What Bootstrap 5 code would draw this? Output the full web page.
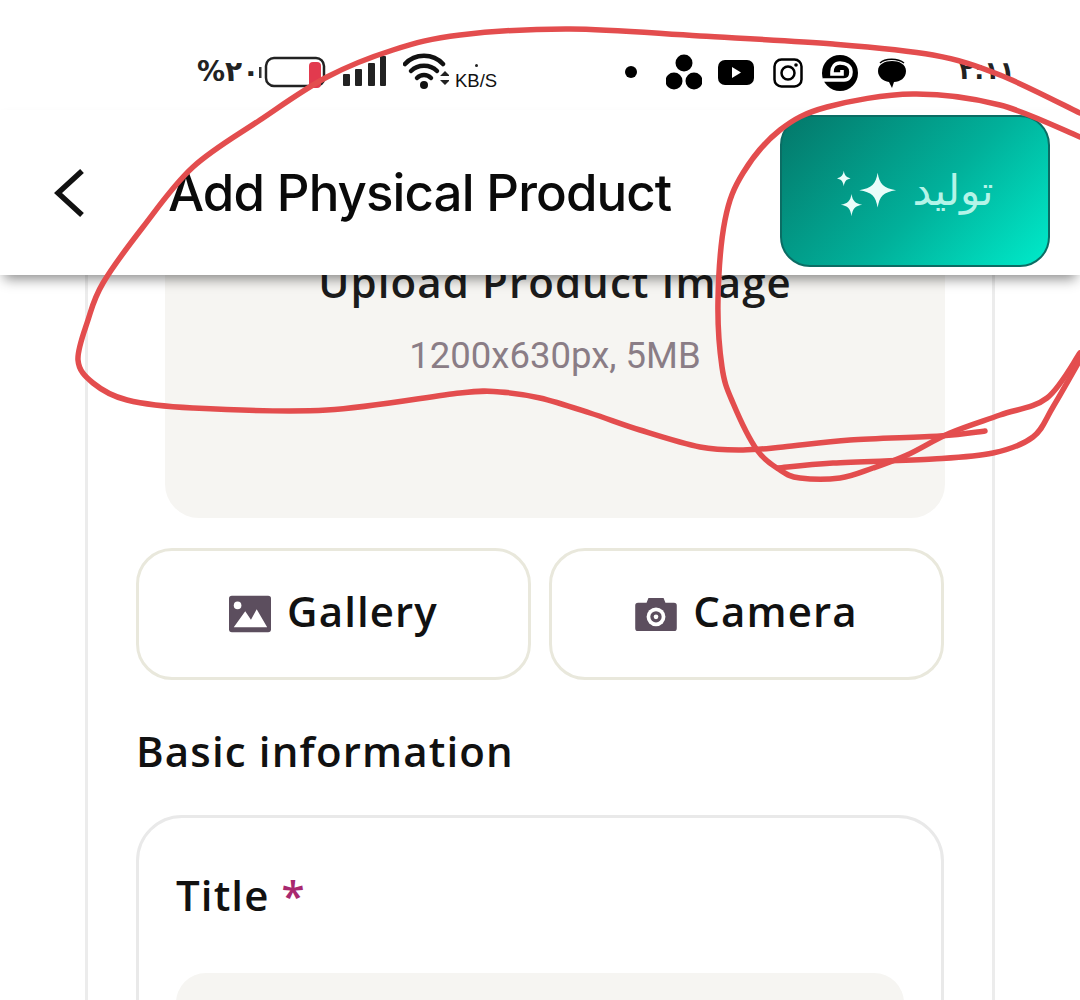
<!DOCTYPE html>
<html lang="en">
<head>
  <meta charset="UTF-8">
  <meta name="viewport" content="width=device-width, initial-scale=1.0">
  <title>Add Physical Product</title>
  <link href="https://cdn.jsdelivr.net/npm/bootstrap@5.3.3/dist/css/bootstrap.min.css" rel="stylesheet">
  <style>
    body { background: #fff; width: 1080px; height: 1000px; overflow: hidden; position: relative; font-family: "Open Sans", sans-serif; color: #111; }
    .status-row { height: 110px; padding: 54px 73px 0 197px; }
    .status-pct { font: 700 28px/36px "DejaVu Sans", sans-serif; letter-spacing: -2px; color: #222; width: 58px; white-space: nowrap; }
    .status-time { font: 700 25px/34px "DejaVu Sans", sans-serif; color: #222; width: 48px; margin-left: 52px; white-space: nowrap; }
    .speed-col { margin: 10px 0 0 6px; }
    .speed-dot { width: 3px; height: 3px; border-radius: 50%; background: #222; margin-bottom: 5px; }
    .speed-txt { font: 500 18.5px/18px "Liberation Sans", sans-serif; color: #111; }
    .top-head { height: 165px; background: #fff; position: relative; z-index: 2; box-shadow: 0 8px 12px -4px rgba(0,0,0,.45); padding: 0 30px 0 54px; }
    .head-title { font: 500 51px/60px "Inter", sans-serif; letter-spacing: -.9px; color: #0a0a0a; margin: 0 0 0 84px; }
    .gen-btn { width: 270px; height: 152px; margin-left: auto; margin-top: -3px; border: 2px solid #0b6d64; border-radius: 30px; background: linear-gradient(135deg, #04786a 0%, #01b09a 55%, #00ebca 100%); color: #b4f4e8; font: 400 42px/48px "DejaVu Sans", sans-serif; gap: 16px; }
    .gen-btn svg { margin-top: 6px; }
    .page-clip { height: 725px; overflow: hidden; }
    .outer-frame { width: 910px; height: 725px; margin-left: 85px; border: solid #ececec; border-width: 0 3px; padding: 0 48px; }
    .upload-box { display: flow-root; width: 780px; height: 243px; margin-left: 29px; background: #f6f5f2; border-radius: 0 0 34px 34px; }
    .upload-title { font: 600 42px/50px "Open Sans", sans-serif; letter-spacing: 1.1px; color: #1c1c1c; margin: -18px 0 0; }
    .upload-hint { font: 400 36.5px/40px "Roboto", sans-serif; color: #8a7d86; margin: 29px 0 0; }
    .pick-btn { width: 395px; height: 132px; border: 3px solid #e9e8dc; border-radius: 36px; background: #fff; font: 600 42px/50px "Open Sans", sans-serif; letter-spacing: 1.1px; color: #111; padding: 0 0 6px; }
    .pick-row { margin-top: 30px; gap: 18px; }
    .sec-title { font: 600 42px/50px "Open Sans", sans-serif; letter-spacing: 1.15px; color: #111; margin: 46px 0 0; }
    .field-box { width: 808px; height: 300px; margin-top: 39px; border: 3px solid #e9e9e9; border-radius: 46px; padding: 52px 37px 0; }
    .field-label { font: 600 42px/50px "Open Sans", sans-serif; letter-spacing: 1.1px; color: #111; }
    .field-label span { color: #a8286f; }
    .field-input { height: 120px; margin-top: 53px; background: #f6f5f2; border-radius: 30px; }
    .scribble { position: absolute; left: 0; top: 0; z-index: 5; pointer-events: none; }
  </style>
</head>
<body>

<div class="status-row d-flex justify-content-between">
  <div class="d-flex align-items-start">
    <div class="status-pct" dir="ltr">%۲۰</div>
    <svg width="68" height="34" viewBox="0 0 68 34" class="ms-1" style="margin-top:2px">
      <rect x="0" y="11" width="2.5" height="11" fill="#333"/>
      <rect x="7" y="2" width="58" height="28" rx="8" fill="#fff" stroke="#222" stroke-width="2.5"/>
      <rect x="50" y="6" width="12" height="26" rx="4" fill="#e23a4e"/>
    </svg>
    <svg width="44" height="32" viewBox="0 0 44 32" class="ms-3" style="margin-top:1px">
      <rect x="0" y="19" width="7" height="12" rx="1" fill="#222"/>
      <rect x="12" y="14" width="7" height="17" rx="1" fill="#222"/>
      <rect x="25" y="8" width="7" height="23" rx="1" fill="#222"/>
      <rect x="37" y="1" width="6" height="30" rx="1" fill="#222"/>
    </svg>
    <svg width="46" height="38" viewBox="0 0 46 38" class="ms-3" style="margin-top:-2px">
      <g fill="none" stroke="#111" stroke-width="4.5" stroke-linecap="round">
        <path d="M2 12C12 1 30 1 40 12"/>
        <path d="M8 19C15 12 27 12 34 19"/>
        <path d="M14 26C18 22 24 22 28 26"/>
      </g>
      <circle cx="21" cy="33" r="4" fill="#111"/>
      <path d="M37 24l5 -5 5 5zM37 28l5 5 5 -5z" fill="#222"/>
    </svg>
    <div class="speed-col d-flex flex-column align-items-center">
      <div class="speed-dot"></div>
      <div class="speed-txt">KB/S</div>
    </div>
  </div>
  <div class="d-flex align-items-start">
    <svg width="14" height="14" viewBox="0 0 14 14" style="margin-top:11px"><circle cx="7" cy="7" r="6" fill="#000"/></svg>
    <svg width="36" height="36" viewBox="0 0 36 36" style="margin:0 0 0 28px"><circle cx="18" cy="9" r="8.5" fill="#000"/><circle cx="8" cy="27" r="8.5" fill="#000"/><circle cx="28" cy="27" r="8.5" fill="#000"/></svg>
    <svg width="36" height="26" viewBox="0 0 36 26" style="margin:6px 0 0 16px"><rect width="36" height="25" rx="7" fill="#000"/><path d="M14 7l9 5.5-9 5.5z" fill="#fff"/></svg>
    <svg width="30" height="30" viewBox="0 0 30 30" style="margin:4px 0 0 19px"><rect x="1.5" y="1.5" width="27" height="27" rx="7" fill="none" stroke="#000" stroke-width="2.5"/><circle cx="15" cy="15" r="6.5" fill="none" stroke="#000" stroke-width="2.5"/><circle cx="23" cy="7" r="1.8" fill="#000"/></svg>
    <svg width="36" height="36" viewBox="0 0 36 36" style="margin:1px 0 0 19px"><circle cx="18" cy="18" r="18" fill="#000"/><path d="M1 25H22C27 25 29 21 29 17C29 11 24 8 18 8C13 8 10 12 10 17V19H20V15" fill="none" stroke="#fff" stroke-width="3.6"/></svg>
    <svg width="30" height="32" viewBox="0 0 30 32" style="margin:3px 0 0 19px"><path d="M3 6C8 1 21 1 27 6" fill="none" stroke="#000" stroke-width="1.5"/><path d="M1 14C1 7 8 4 15 4C22 4 29 7 29 14C29 21 23 25 17 25L15 31L12 25C6 24 1 20 1 14Z" fill="#000"/></svg>
    <div class="status-time" dir="ltr">۲:۱۱</div>
  </div>
</div>

<header class="top-head d-flex align-items-center">
  <svg width="30" height="50" viewBox="0 0 30 50"><path d="M28 3L4 25L28 47" fill="none" stroke="#111" stroke-width="5.5"/></svg>
  <h1 class="head-title">Add Physical Product</h1>
  <button type="button" class="gen-btn d-flex align-items-center justify-content-center p-0">
    <svg width="60" height="48" viewBox="0 0 62 48" fill="#e9fdfa">
      <path d="M7 0C8 5 9 6 14 8C9 9 8 11 7 16C6 11 5 9 0 8C5 6 6 5 7 0Z"/>
      <path d="M42 2C44 14 48 18 61 20C48 22 44 26 42 38C40 26 36 22 23 20C36 18 40 14 42 2Z"/>
      <path d="M15 24C16 31 19 34 26 35C19 36 16 39 15 47C14 39 11 36 4 35C11 34 14 31 15 24Z"/>
    </svg>
    <span dir="rtl">تولید</span>
  </button>
</header>

<main class="page-clip">
  <div class="outer-frame">
    <div class="upload-box text-center">
      <p class="upload-title">Upload Product Image</p>
      <p class="upload-hint">1200x630px, 5MB</p>
    </div>
    <div class="pick-row d-flex">
      <button type="button" class="pick-btn d-flex align-items-center justify-content-center gap-3">
        <svg width="42" height="38" viewBox="0 0 44 38" style="margin-top:6px"><rect width="44" height="38" rx="3" fill="#5c4e5e"/><circle cx="9" cy="10" r="4" fill="#fff"/><path d="M5 33L17 16L23 25L29 14L40 33Z" fill="#fff"/></svg>
        Gallery
      </button>
      <button type="button" class="pick-btn d-flex align-items-center justify-content-center gap-3">
        <svg width="42" height="34" viewBox="0 0 44 36" style="margin-top:6px"><path d="M3 6H12L14 1H30L32 6H41Q44 6 44 9V33Q44 36 41 36H3Q0 36 0 33V9Q0 6 3 6Z" fill="#5c4e5e"/><circle cx="22" cy="21" r="10" fill="#fff"/><circle cx="22" cy="21" r="6" fill="#5c4e5e"/><circle cx="22" cy="21" r="2.5" fill="#fff"/></svg>
        Camera
      </button>
    </div>
    <h2 class="sec-title">Basic information</h2>
    <div class="field-box">
      <div class="field-label">Title <span>*</span></div>
      <div class="field-input"></div>
    </div>
  </div>
</main>

<svg class="scribble" id="scribble" width="1080" height="1000" viewBox="0 0 1080 1000" fill="none" stroke="#e34d4e" stroke-width="5.5" stroke-linecap="round" stroke-linejoin="round"></svg>

<script src="https://cdn.jsdelivr.net/npm/bootstrap@5.3.3/dist/js/bootstrap.bundle.min.js"></script>
<script>
// pen strokes drawn over the screenshot, smoothed through the traced points
const strokes = [
  [[985,431],[940,436],[850,440],[783,447],[743,450],[700,447],[640,430],[590,413],[540,398],[500,392],[460,393],[327,410],[193,408],[127,400],[93,383],[78,360],[88,320],[103,283],[143,227],[193,167],[260,120],[327,77],[393,50],[460,35],[570,29],[700,36],[833,44],[933,55],[1000,75],[1080,113]],
  [[1080,137],[1000,105],[913,94],[827,107],[780,130],[743,173],[725,220],[718,300],[722,367],[733,403],[757,450],[780,470],[800,478],[840,478],[873,468],[907,455],[950,433],[1000,415],[1047,398],[1080,353]],
  [[778,468],[833,463],[933,459],[993,453],[1033,437],[1053,407],[1080,360]]
];
const svg = document.getElementById('scribble');
strokes.forEach(p => {
  let d = `M${p[0][0]} ${p[0][1]}`;
  for (let i = 0; i < p.length - 1; i++) {
    const a = p[Math.max(i - 1, 0)], b = p[i], c = p[i + 1], e = p[Math.min(i + 2, p.length - 1)];
    d += `C${b[0] + (c[0] - a[0]) / 6} ${b[1] + (c[1] - a[1]) / 6} ${c[0] - (e[0] - b[0]) / 6} ${c[1] - (e[1] - b[1]) / 6} ${c[0]} ${c[1]}`;
  }
  const path = document.createElementNS('http://www.w3.org/2000/svg', 'path');
  path.setAttribute('d', d);
  svg.appendChild(path);
});
</script>
</body>
</html>
